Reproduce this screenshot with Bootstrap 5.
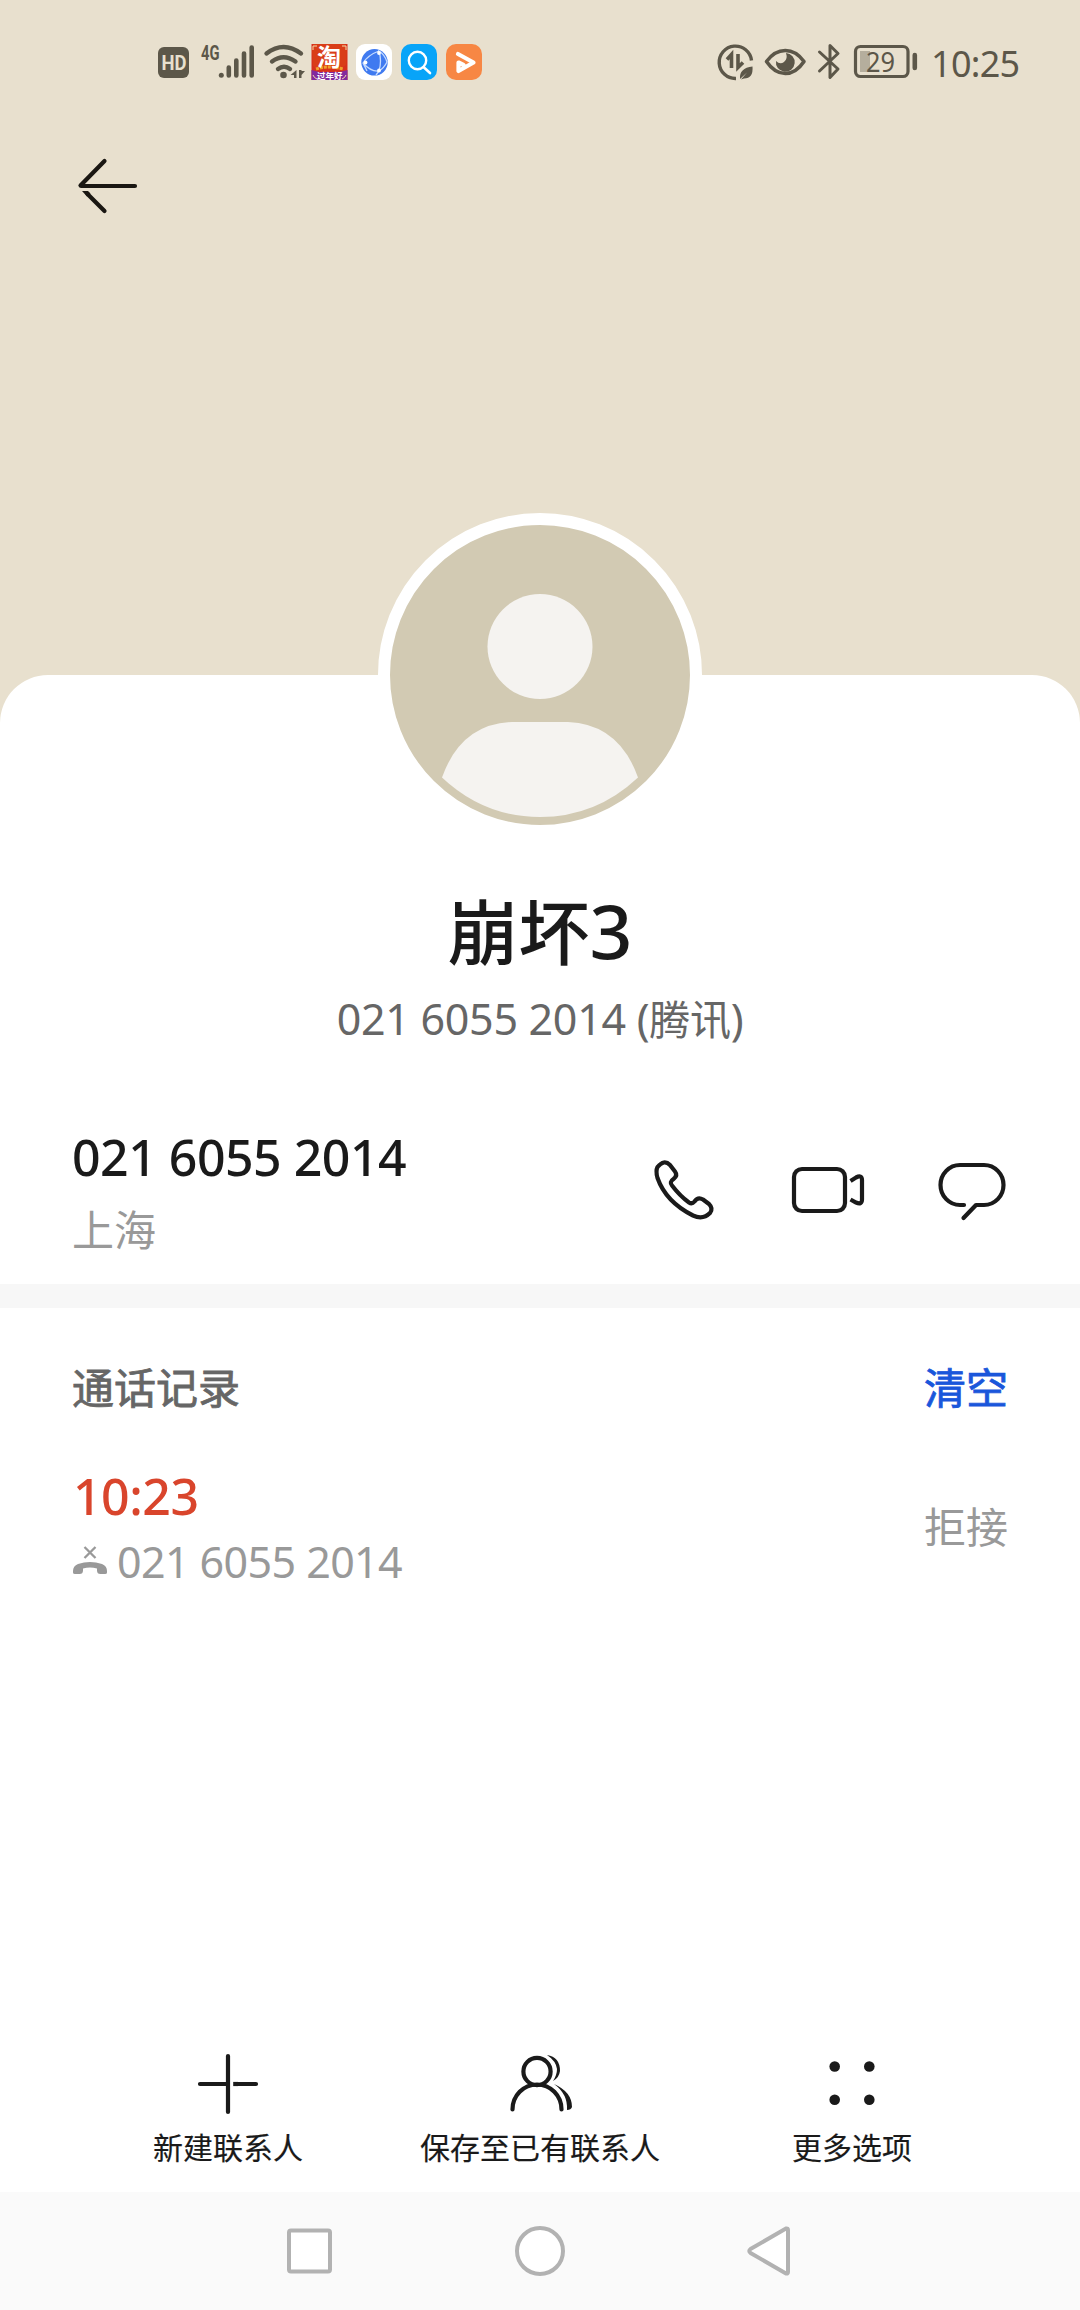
<!DOCTYPE html>
<html lang="zh-CN">
<head>
<meta charset="utf-8">
<meta name="viewport" content="width=device-width, initial-scale=1">
<title>崩坏3</title>
<link href="https://cdn.jsdelivr.net/npm/bootstrap@5.3.0/dist/css/bootstrap.min.css" rel="stylesheet">
<style>
  body { font-family: "Noto Sans", "Noto Sans CJK SC", sans-serif; color: #1a1a1a; background: #fff; }
  svg { display: block; flex: none; overflow: visible; }
  .screen { width: 1080px; height: 2310px; background: #e8e0ce; }
  .statusbar { height: 124px; padding: 0 59px 0 157px; color: #5c5749; }
  .clock { font-size: 36px; line-height: 44px; letter-spacing: -.7px; margin-left: 13px; width: 90px; padding-top: 3px; white-space: nowrap; }
  .topbar { height: 551px; padding: 22px 0 0 68px; }
  .sheet { border-radius: 48px 48px 0 0; background: #fff; }
  .avatar { width: 324px; height: 324px; margin-top: -162px; border: 12px solid #fff; background: #d2cab3; }
  .who { font-size: 71px; line-height: 84px; margin-top: 53px; font-weight: 500; }
  .who-digit { font-size: 75px; line-height: 1; }
  .who-num { font-size: 43px; line-height: 48px; margin-top: 21px; color: #666; letter-spacing: -.3px; }
  .who-num span { font-size: 41px; }
  .contact { height: 241px; padding: 84px 68px 0 72px; }
  .tel { font-size: 50px; line-height: 60px; font-weight: 500; letter-spacing: -.5px; }
  .city { font-size: 42px; line-height: 50px; margin-top: 18px; color: #999; }
  .acts { gap: 64px; margin-top: 22px; }
  .band { height: 24px; background: #f7f7f7; }
  .log { padding: 55px 72px 0; font-size: 42px; line-height: 50px; }
  .log-title { color: #666; -webkit-text-stroke: .8px currentColor; }
  .clear { color: #1a56db; -webkit-text-stroke: .8px currentColor; text-decoration: none; }
  .entry { margin-top: 51px; }
  .when { font-size: 50px; line-height: 64px; font-weight: 500; color: #d9452c; letter-spacing: -.5px; padding-left: 1px; }
  .from { font-size: 43px; line-height: 50px; margin-top: 9px; color: #999; letter-spacing: -.6px; gap: 9px; }
  .result { color: #999; margin-top: 38px; }
  .tools { height: 148px; padding: 0 72px; font-size: 30px; line-height: 40px; }
  .tools > div { width: 312px; }
  .tools p { margin: 4px 0 0; white-space: nowrap; -webkit-text-stroke: .15px currentColor; }
  .sysnav { height: 118px; padding: 0 194px 0 193px; background: #fafafa; }
  .sysnav > div { width: 231px; }
</style>
</head>
<body>
<div class="screen d-flex flex-column overflow-hidden">
  <header class="statusbar d-flex align-items-center flex-shrink-0">
    <svg width="148" height="40" viewBox="157 42 148 40" fill="currentColor">
      <rect x="158" y="47" width="31" height="31" rx="6"/>
      <text x="161.500" y="70" font-family="Roboto" font-weight="700" font-size="21" fill="#e8e0ce" textLength="25" lengthAdjust="spacingAndGlyphs">HD</text>
      <text x="201" y="60" font-family="Roboto" font-weight="700" font-size="20" textLength="18.500" lengthAdjust="spacingAndGlyphs">4G</text>
      <circle cx="221.300" cy="75.300" r="2.500"/>
      <g stroke="currentColor" stroke-width="4.600" stroke-linecap="round"><path d="M228.800 67.500v8M236.300 60.500v15M244 53.500v22M251.700 47.500v28"/></g>
      <g fill="none" stroke="currentColor" stroke-width="4.400" stroke-linecap="round"><path d="M266.500 53.500q17-13 34.500 0M272 61.500q11.500-8.500 23.500 0M278 69q6-4.500 12 0"/></g>
      <circle cx="283.500" cy="75" r="3.300"/>
      <path d="M296.500 70v8h-2.500v-3h-3.500zM299 70h2.500v8h-2.500zM301 71h4l-3.500 4z"/>
    </svg>
    <svg class="ms-1" width="180" height="40" viewBox="309 42 180 40">
      <rect x="311.500" y="44" width="36" height="36" fill="#d7311d"/>
      <path d="M314 44h31l2 5-1 16-6 4h-21l-6-3-1-17z" fill="#d93d18"/>
      <path d="M316 69q13-4 27 0" stroke="#f0a12c" stroke-width="3" stroke-dasharray="3 1" fill="none"/>
      <path d="M311.500 70l8 2h20l8-2v10h-36z" fill="#82299e"/>
      <path d="M313 50v-4h4M342 46h4v4M313 75q1 3 4 4M346 75q-1 3-4 4" stroke="#f7d8a8" stroke-width="1" fill="none"/>
      <text x="317" y="66" font-family="Noto Sans CJK SC" font-weight="700" font-size="24" fill="#fff">淘</text>
      <text x="317" y="78.500" font-family="Noto Sans CJK SC" font-weight="700" font-size="8.500" fill="#fff">过年好</text>
      <rect x="356" y="44" width="36" height="36" rx="9" fill="#fff"/>
      <circle cx="374.500" cy="62.300" r="13.200" fill="#3f7af0"/>
      <path d="M379 51q-11 4-16 12 8 9 16 8 3-10 0-20q6 4 8 11-3 6-8 9l-3 4M363 63l4 8" fill="none" stroke="#c6dcff" stroke-width="1.300"/>
      <g fill="#fff"><circle cx="379" cy="53" r="1.900"/><circle cx="365.500" cy="62.500" r="1.900"/><circle cx="379" cy="70.500" r="1.900"/></g>
      <rect x="401" y="44" width="36" height="36" rx="10" fill="#08a4f8"/>
      <circle cx="417.500" cy="60.500" r="8.700" fill="none" stroke="#fff" stroke-width="2.400"/>
      <path d="M424 67.500l6 5.500" stroke="#fff" stroke-width="2.600" stroke-linecap="round"/>
      <rect x="446" y="44" width="36" height="36" rx="10" fill="#f78744"/>
      <path d="M458 54l15.500 8.500-15 8.500v-8.500l5 2.500" fill="none" stroke="#fff" stroke-width="4.200" stroke-linejoin="round" stroke-linecap="round"/>
    </svg>
    <svg class="ms-auto" width="202" height="40" viewBox="716 42 202 40" fill="none" stroke="currentColor">
      <path d="M736 78.500a16.200 16.200 0 1 1 15.500-18" stroke-width="3.400"/>
      <path d="M727 59.500l4.500-5v13.500M738 54v13.500l5-5" stroke-width="3.600"/>
      <path d="M740 79q-1-11 12.500-12.500 1 12-8.500 12l-3 1 6-7" fill="currentColor" stroke="none"/>
      <path d="M766.500 61.500q8-11 18.800-11t18.700 11q-8 12-18.700 12t-18.800-12z" stroke-width="3.600" stroke-linejoin="round"/>
      <path d="M786 53a9.400 9.400 0 1 1-10 8q4 4 8 1t2-9z" fill="currentColor" stroke="none"/>
      <path d="M819.500 52l18.500 17-8 8.500v-32l8 8-18.500 17.500" stroke-width="3" stroke-linejoin="round" stroke-linecap="round"/>
      <rect x="855.500" y="46.500" width="52.500" height="30" rx="5" stroke-width="3.200"/>
      <path d="M860 51h10v21h-10z" fill="#b5ae9d" stroke="none"/>
      <path d="M914.800 55v13" stroke-width="4.600" stroke-linecap="round"/>
      <text x="866" y="71.500" font-family="Noto Sans" font-size="27.500" fill="currentColor" stroke="none" textLength="29" lengthAdjust="spacingAndGlyphs">29</text>
    </svg>
    <div class="clock">10:25</div>
  </header>

  <div class="topbar flex-shrink-0">
    <svg width="80" height="80" viewBox="68 146 80 80" fill="none" stroke="#1a1712" stroke-width="4.200" stroke-linecap="round" stroke-linejoin="round">
      <path d="M104.500 161L80.500 185.500M81 186h54M104.500 211l-17-17"/>
      <path d="M82 191h6l2.500 2.500-3.500 3z" fill="#1a1712" stroke="none"/>
    </svg>
  </div>

  <main class="sheet flex-grow-1 d-flex flex-column">
    <section class="d-flex flex-column align-items-center">
      <div class="avatar rounded-circle">
        <svg width="300" height="300" viewBox="0 0 300 300" fill="#f5f3f0">
          <circle cx="150" cy="121.500" r="52.500"/>
          <path d="M122 197h56Q229 199 248 252.500Q206 292 150 292T52 252.500Q71 199 122 197z"/>
        </svg>
      </div>
      <h1 class="who mb-0">崩坏<span class="who-digit">3</span></h1>
      <div class="who-num">021 6055 2014 (<span>腾讯</span>)</div>
    </section>

    <section class="contact d-flex justify-content-between flex-shrink-0">
      <div>
        <div class="tel">021 6055 2014</div>
        <div class="city">上海</div>
      </div>
      <div class="acts d-flex">
        <svg width="80" height="80" viewBox="644 1148 80 80" fill="none" stroke="#1a1a1a" stroke-width="4.200" stroke-linejoin="round">
          <path d="M657.500 1166Q664 1158 670 1164L675 1170.500Q678 1174.500 673.500 1178Q669 1181 672 1184.500Q680 1195 689 1201.500Q692 1203.500 694.500 1200.500Q698 1195.500 703 1198.500L709 1203Q713.500 1207.500 710 1212Q703 1219 693 1214.500Q666 1201 657.500 1177Q655.500 1170 657.500 1166z"/>
        </svg>
        <svg width="80" height="80" viewBox="788 1148 80 80" fill="none" stroke="#1a1a1a" stroke-width="4.200">
          <rect x="794" y="1168" width="51" height="42" rx="8"/>
          <path d="M850.500 1180l5.500-3.500q6-3 6 2.500v19.500q0 5.500-6 3l-5.500-3"/>
        </svg>
        <svg width="80" height="80" viewBox="932 1148 80 80" fill="none" stroke="#1a1a1a" stroke-width="4.200" stroke-linecap="round">
          <path d="M964 1204h-4a19.500 20 0 0 1 0-40h24a19.500 20 0 0 1 0 40h-8l-12.500 13" stroke-linejoin="round"/>
        </svg>
      </div>
    </section>

    <div class="band flex-shrink-0"></div>

    <section class="log flex-grow-1">
      <div class="d-flex justify-content-between">
        <div class="log-title">通话记录</div>
        <a class="clear" href="#">清空</a>
      </div>
      <div class="entry d-flex justify-content-between">
        <div>
          <div class="when">10:23</div>
          <div class="from d-flex align-items-center">
            <svg width="36" height="40" viewBox="72 1542 36 40">
              <path d="M84.500 1547l11 11M95.500 1547l-11 11" stroke="#999" stroke-width="2.300"/>
              <path d="M73 1571q0-5 5-7 12-4 24 0 5 2 5 7v1.500q0 1.500-2 1.500h-4.500q-3.500 0-3.500-3.500v-2q-7-2-14 0v2q0 3.500-3.500 3.500h-4.500q-2 0-2-1.500z" fill="#999"/>
            </svg>
            <span>021 6055 2014</span>
          </div>
        </div>
        <div class="result">拒接</div>
      </div>
    </section>

    <nav class="tools d-flex text-center flex-shrink-0">
      <div>
        <svg class="mx-auto" width="80" height="80" viewBox="188 2044 80 80" fill="none" stroke="#1a1a1a" stroke-width="4.200" stroke-linecap="round">
          <path d="M228 2056v56M200 2084h28M236 2084h20"/><path d="M233.200 2084h5" stroke-linecap="butt"/>
        </svg>
        <p>新建联系人</p>
      </div>
      <div>
        <svg class="mx-auto" width="80" height="80" viewBox="500 2044 80 80" fill="none" stroke="#1a1a1a" stroke-width="4.200" stroke-linecap="round">
          <circle cx="537" cy="2071.500" r="13.600"/>
          <path d="M512.500 2109.500a24.500 25 0 0 1 49 0"/>
          <path d="M547 2055Q560 2057 560 2071Q559 2078 553 2081Q557 2075 557 2069Q556 2061 547 2055zM554 2084Q572 2092 572 2107Q571 2110 567 2110Q568 2094 554 2084z" fill="#1a1a1a" stroke="none"/>
        </svg>
        <p>保存至已有联系人</p>
      </div>
      <div>
        <svg class="mx-auto" width="80" height="80" viewBox="812 2044 80 80" fill="#1a1a1a">
          <circle cx="834.700" cy="2066.500" r="5.300"/><circle cx="869.300" cy="2066.500" r="5.300"/><circle cx="834.700" cy="2099.700" r="5.300"/><circle cx="869.300" cy="2099.700" r="5.300"/>
        </svg>
        <p>更多选项</p>
      </div>
    </nav>
    <footer class="sysnav d-flex align-items-center flex-shrink-0">
      <div><svg class="mx-auto" width="60" height="60" viewBox="279 2221 60 60"><rect x="289" y="2230.500" width="41" height="41" rx="2" fill="#fff" stroke="#b2b2b2" stroke-width="4"/></svg></div>
      <div><svg class="mx-auto" width="60" height="60" viewBox="510 2221 60 60"><circle cx="540" cy="2251" r="23" fill="#fff" stroke="#b2b2b2" stroke-width="4"/></svg></div>
      <div><svg class="mx-auto" width="60" height="60" viewBox="741 2221 60 60"><path d="M786 2228.500Q788 2228 788 2230V2272Q788 2274 786 2273.500L750.500 2253Q748 2251 750.500 2249z" fill="#fff" stroke="#b2b2b2" stroke-width="4" stroke-linejoin="round"/></svg></div>
    </footer>
  </main>
</div>
<script src="https://cdn.jsdelivr.net/npm/bootstrap@5.3.0/dist/js/bootstrap.bundle.min.js"></script>
</body>
</html>
